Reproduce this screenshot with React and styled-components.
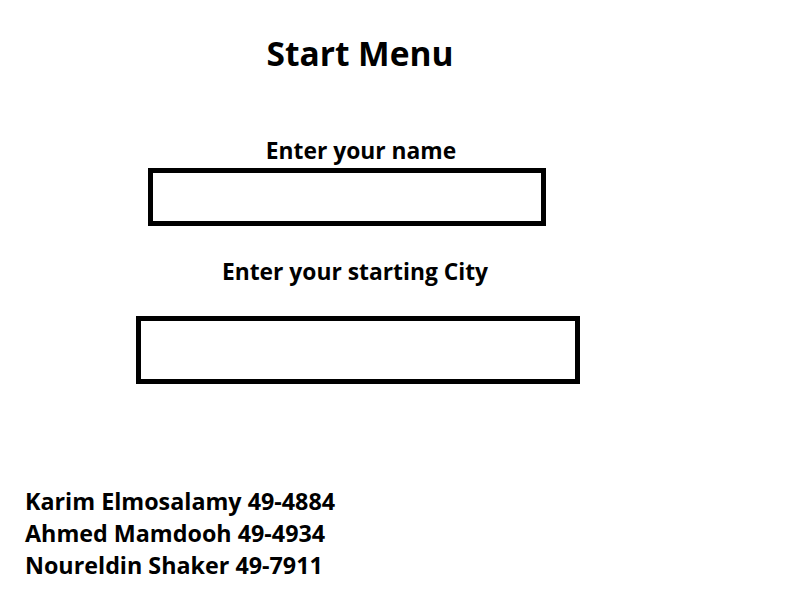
import React from "react";
import styled, { createGlobalStyle } from "styled-components";

const GlobalStyle = createGlobalStyle`
  html, body {
    margin: 0;
    padding: 0;
    background: #fff;
  }
  body {
    font-family: "Open Sans", "Noto Sans", sans-serif;
    font-weight: 700;
    color: #000;
  }
`;

const Page = styled.div`
  width: 800px;
  height: 600px;
  display: flex;
  flex-direction: column;
  box-sizing: border-box;
`;

const Menu = styled.div`
  width: 720px;
  display: flex;
  flex-direction: column;
  align-items: center;
`;

const Title = styled.h1`
  margin: 32px 0 0;
  font-size: 33.5px;
  line-height: 42px;
  font-weight: 700;
`;

const Label = styled.label`
  display: block;
  margin-top: ${(p) => p.$top}px;
  font-size: 22.8px;
  line-height: 28px;
  font-weight: 700;
  transform: translateX(${(p) => p.$shift || 0}px);
`;

const Field = styled.input`
  box-sizing: border-box;
  width: ${(p) => p.$w}px;
  height: ${(p) => p.$h}px;
  margin-top: ${(p) => p.$top}px;
  border: 5px solid #000;
  background: #fff;
  outline: none;
  transform: translateX(${(p) => p.$shift || 0}px);
`;

const Credits = styled.div`
  margin-top: 101px;
  padding-left: 25px;
  display: flex;
  flex-direction: column;
`;

const Credit = styled.div`
  font-size: 23.3px;
  line-height: 32px;
`;

export default function App() {
  return (
    <>
      <GlobalStyle />
      <Page>
        <Menu>
          <Title>Start Menu</Title>
          <Label $top={63} $shift={1}>Enter your name</Label>
          <Field $w={398} $h={58} $top={3} $shift={-13} />
          <Label $top={32} $shift={-5}>Enter your starting City</Label>
          <Field $w={444} $h={68} $top={30} $shift={-2} />
        </Menu>
        <Credits>
          <Credit>Karim Elmosalamy 49-4884</Credit>
          <Credit>Ahmed Mamdooh 49-4934</Credit>
          <Credit>Noureldin Shaker 49-7911</Credit>
        </Credits>
      </Page>
    </>
  );
}
